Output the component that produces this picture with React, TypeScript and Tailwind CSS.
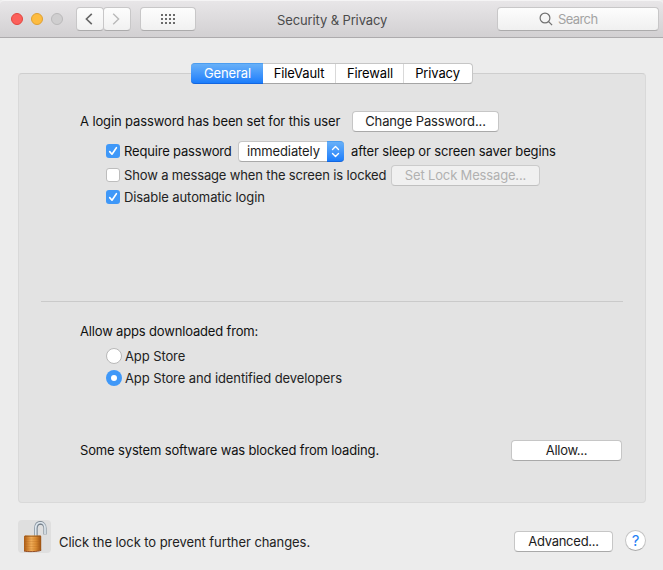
import type { ReactNode } from 'react';

function Push({ className = '', children }: { className?: string; children: ReactNode }) {
  return (
    <button
      className={`flex shrink-0 items-center justify-center rounded-[4px] border border-[#c6c6c6] border-b-[#a9a9a9] bg-white pb-px text-[#1c1c1c] ${className}`}
    >
      {children}
    </button>
  );
}

function Check({ on = false }: { on?: boolean }) {
  return on ? (
    <svg className="shrink-0" width="14" height="14" viewBox="0 0 14 14">
      <rect width="14" height="14" rx="3" fill="#3f98f8" />
      <path d="M3.7 7.6 6 10.2 10.4 3.7" fill="none" stroke="#fff" strokeWidth="1.6" strokeLinecap="round" strokeLinejoin="round" />
    </svg>
  ) : (
    <span className="h-[14px] w-[14px] shrink-0 rounded-[3px] border border-[#bdbdbd] bg-white" />
  );
}

function Lock() {
  return (
    <svg width="33" height="33" viewBox="0 0 33 33">
      <defs>
        <linearGradient id="brass" x1="0" x2="1">
          <stop offset="0" stopColor="#a85a16" />
          <stop offset="0.2" stopColor="#cf8130" />
          <stop offset="0.42" stopColor="#f0ad58" />
          <stop offset="0.7" stopColor="#d98a31" />
          <stop offset="1" stopColor="#9a4f10" />
        </linearGradient>
        <linearGradient id="steel" x1="0" x2="1">
          <stop offset="0" stopColor="#8795a1" />
          <stop offset="0.5" stopColor="#66727d" />
          <stop offset="1" stopColor="#a3adb5" />
        </linearGradient>
      </defs>
      <path d="M17.9 16V8.5C18 4.8 20 2.9 22.5 2.9S27 5 27.1 8.2V14.5" fill="none" stroke="url(#steel)" strokeWidth="3.6" />
      <path d="M17.7 16V8.5C17.8 4.6 20 2.6 22.5 2.6S27 5 27 8.2V14" fill="none" stroke="#dde5ec" strokeWidth="1.6" />
      <path d="M6 16.3 7 15.6H22.5L23.2 16.3V30.3C20 31.8 9 32 6 31Z" fill="url(#brass)" />
      <path d="M6.3 19H23M6.3 21.5H23M6.3 24H23M6.3 26.5H23M6.3 29H23" stroke="#a75c17" strokeOpacity="0.28" strokeWidth="0.8" />
      <path d="M7 16.2H22.5" stroke="#8f5018" strokeWidth="0.8" />
      <path d="M6 31C9 32 20 31.8 23.2 30.3" fill="none" stroke="#8b421a" strokeWidth="0.9" />
    </svg>
  );
}

const dots = [0, 4, 8, 12];

export default function App() {
  return (
    <div className="flex h-[570px] w-[663px] flex-col overflow-hidden whitespace-nowrap bg-[#ececec] font-['Inter',sans-serif] text-[13px] leading-[16px] tracking-[-0.12px] text-[#111]">
      <header className="flex h-[38px] shrink-0 items-start rounded-t-[4px] border-t border-b border-t-[#f5f4f5] border-b-[#adabad] bg-linear-to-b from-[#e8e6e8] to-[#d2d0d2]">
        <div className="ml-[11px] mt-[12px] flex gap-[8px]">
          <span className="h-[12px] w-[12px] rounded-full border border-[#e2463f] bg-[#fc605b]" />
          <span className="h-[12px] w-[12px] rounded-full border border-[#dfa032] bg-[#fdbc40]" />
          <span className="h-[12px] w-[12px] rounded-full border border-[#bab9ba] bg-[#cfcecf]" />
        </div>
        <div className="ml-[13px] mt-[6px] flex">
          <span className="flex h-[24px] w-[28px] items-center justify-center rounded-[4px] border border-[#c8c7c8] border-b-[#acabac] bg-linear-to-b from-[#fdfdfd] to-[#f1f1f1] pr-[2px]">
            <svg width="8" height="12" viewBox="0 0 8 12"><path d="M6.8.8 1.4 6l5.4 5.2" fill="none" stroke="#666" strokeWidth="1.6" /></svg>
          </span>
          <span className="-ml-px flex h-[24px] w-[28px] items-center justify-center rounded-[4px] border border-[#c8c7c8] border-b-[#acabac] bg-linear-to-b from-[#fdfdfd] to-[#f1f1f1] pr-[2px]">
            <svg width="8" height="12" viewBox="0 0 8 12"><path d="M1.2.8 6.6 6l-5.4 5.2" fill="none" stroke="#b9b9b9" strokeWidth="1.4" /></svg>
          </span>
        </div>
        <span className="ml-[9px] mt-[6px] flex h-[24px] w-[56px] items-center justify-center rounded-[4px] border border-[#c8c7c8] border-b-[#acabac] bg-linear-to-b from-[#fdfdfd] to-[#f1f1f1]">
          <svg width="14" height="10" viewBox="0 0 14 10">
            {[0, 4, 8].map((y) => dots.map((x) => <rect key={`${x}-${y}`} x={x} y={y} width="2" height="2" fill="#6b6b6b" />))}
          </svg>
        </span>
        <h1 className="ml-[81px] mt-[11px] w-[110px] tracking-[-0.12px] text-[#4b4b4b]">Security &amp; Privacy</h1>
        <div className="ml-[110px] mt-[6px] flex h-[24px] w-[162px] items-center rounded-[4px] border border-[#c8c7c8] border-b-[#acabac] bg-linear-to-b from-[#fdfdfd] to-[#f0f0f0] pl-[41px] text-[#a3a3a3]">
          <svg width="14" height="14" viewBox="0 0 14 14" fill="none" stroke="#727272" strokeWidth="1.2"><circle cx="6" cy="6" r="4.9" /><path d="m9.5 9.5 3.6 3.6" /></svg>
          <span className="ml-[5px] tracking-[-0.6px]">Search</span>
        </div>
      </header>

      <main className="ml-[18px] mt-[35px] flex h-[430px] w-[628px] shrink-0 flex-col rounded-[4px] border border-[#d9d9d9] border-t-[#cecece] bg-[#e3e3e3]">
        <nav className="-mt-[11px] ml-[172px] flex h-[21px] w-[282px] shrink-0 rounded-[4px] border border-[#c6c6c6] border-b-[#a5a5a5] bg-white text-black">
          <span className="-mb-px -ml-px -mt-px flex w-[72px] items-center justify-center rounded-l-[4px] border-b border-t border-b-[#1366e0] border-t-[#4b9df0] bg-linear-to-b from-[#67b0f8] to-[#1a7dfb] pb-px pl-px text-white">General</span>
          <span className="flex w-[73px] items-center justify-center border-r border-[#d9d9d9] pb-px">FileVault</span>
          <span className="flex w-[68px] items-center justify-center border-r border-[#d9d9d9] pb-px pl-px">Firewall</span>
          <span className="flex w-[67px] items-center justify-center pb-px">Privacy</span>
        </nav>

        <section className="ml-[61px] mt-[26px] flex shrink-0 flex-col">
          <div className="flex h-[22px] items-center">
            <span className="w-[272px]">A login password has been set for this user</span>
            <Push className="mt-px h-[21px] w-[147px]">Change Password...</Push>
          </div>
          <div className="ml-[26px] mt-[8px] flex h-[22px] items-center">
            <Check on />
            <span className="ml-[4px] w-[114px] tracking-[-0.18px]">Require password</span>
            <span className="mt-px flex h-[21px] w-[106px] rounded-[4px] border border-[#c6c6c6] border-b-[#a9a9a9] bg-white">
              <span className="flex w-[88px] items-center pb-px pl-[8px] text-[#1c1c1c]">immediately</span>
              <span className="-mb-px -mr-px -mt-px flex w-[17px] shrink-0 items-center justify-center rounded-r-[4px] border-b border-t border-b-[#1366e0] border-t-[#4b9df0] bg-linear-to-b from-[#67b0f8] to-[#1a7dfb]">
                <svg width="9" height="13" viewBox="0 0 9 13"><path d="m1.5 4.5 3-3 3 3M1.5 8.5l3 3 3-3" fill="none" stroke="#fff" strokeWidth="1.4" strokeLinecap="round" strokeLinejoin="round" /></svg>
              </span>
            </span>
            <span className="ml-[7px]">after sleep or screen saver begins</span>
          </div>
          <div className="ml-[26px] mt-[2px] flex h-[22px] items-center text-[#222]">
            <Check />
            <span className="ml-[4px] w-[267px] tracking-[-0.15px]">Show a message when the screen is locked</span>
            <span className="mt-px flex h-[21px] w-[149px] items-center justify-center rounded-[4px] border border-[#cbcbcb] border-b-[#c0c0c0] bg-[#f0f0f0] pb-px tracking-[-0.16px] text-[#b1b1b1]">Set Lock Message...</span>
          </div>
          <div className="ml-[26px] mt-px flex h-[20px] items-center text-[#222]">
            <Check on />
            <span className="ml-[4px] tracking-[-0.09px]">Disable automatic login</span>
          </div>
        </section>

        <hr className="mx-[22px] mt-[94px] shrink-0 border-[#cacaca]" />

        <section className="ml-[61px] mt-[19px] flex shrink-0 flex-col">
          <h2 className="flex h-[20px] items-center tracking-[-0.17px]">Allow apps downloaded from:</h2>
          <div className="ml-[26px] mt-[4px] flex h-[22px] items-center text-[#222]">
            <span className="h-[16px] w-[16px] rounded-full border border-[#b8b8b8] bg-white" />
            <span className="ml-[3px] tracking-[-0.1px]">App Store</span>
          </div>
          <div className="ml-[26px] flex h-[22px] items-center text-[#222]">
            <span className="flex h-[16px] w-[16px] items-center justify-center rounded-full bg-[#3f98f8]"><span className="h-[6px] w-[6px] rounded-full bg-white" /></span>
            <span className="ml-[3px] tracking-[-0.1px]">App Store and identified developers</span>
          </div>
          <div className="mt-[50px] flex h-[22px] items-center">
            <span className="w-[431px] tracking-[-0.15px]">Some system software was blocked from loading.</span>
            <Push className="mt-px h-[21px] w-[111px] tracking-[-0.3px]">Allow...</Push>
          </div>
        </section>
      </main>

      <footer className="ml-[18px] mt-[17px] flex h-[33px] shrink-0 items-start">
        <span className="h-[33px] w-[33px] rounded-[4px] bg-[#dfdfdf]"><Lock /></span>
        <span className="ml-[8px] mt-[14px] w-[455px] tracking-[-0.07px] text-[#222]">Click the lock to prevent further changes.</span>
        <Push className="mt-[11px] h-[21px] w-[99px] tracking-[-0.25px]">Advanced...</Push>
        <span className="ml-[12px] mt-[10px] flex h-[21px] w-[21px] shrink-0 items-center justify-center rounded-full border border-[#c4c4c4] border-b-[#a9a9a9] bg-white text-[15px] text-[#1f80f5]">?</span>
      </footer>
    </div>
  );
}
